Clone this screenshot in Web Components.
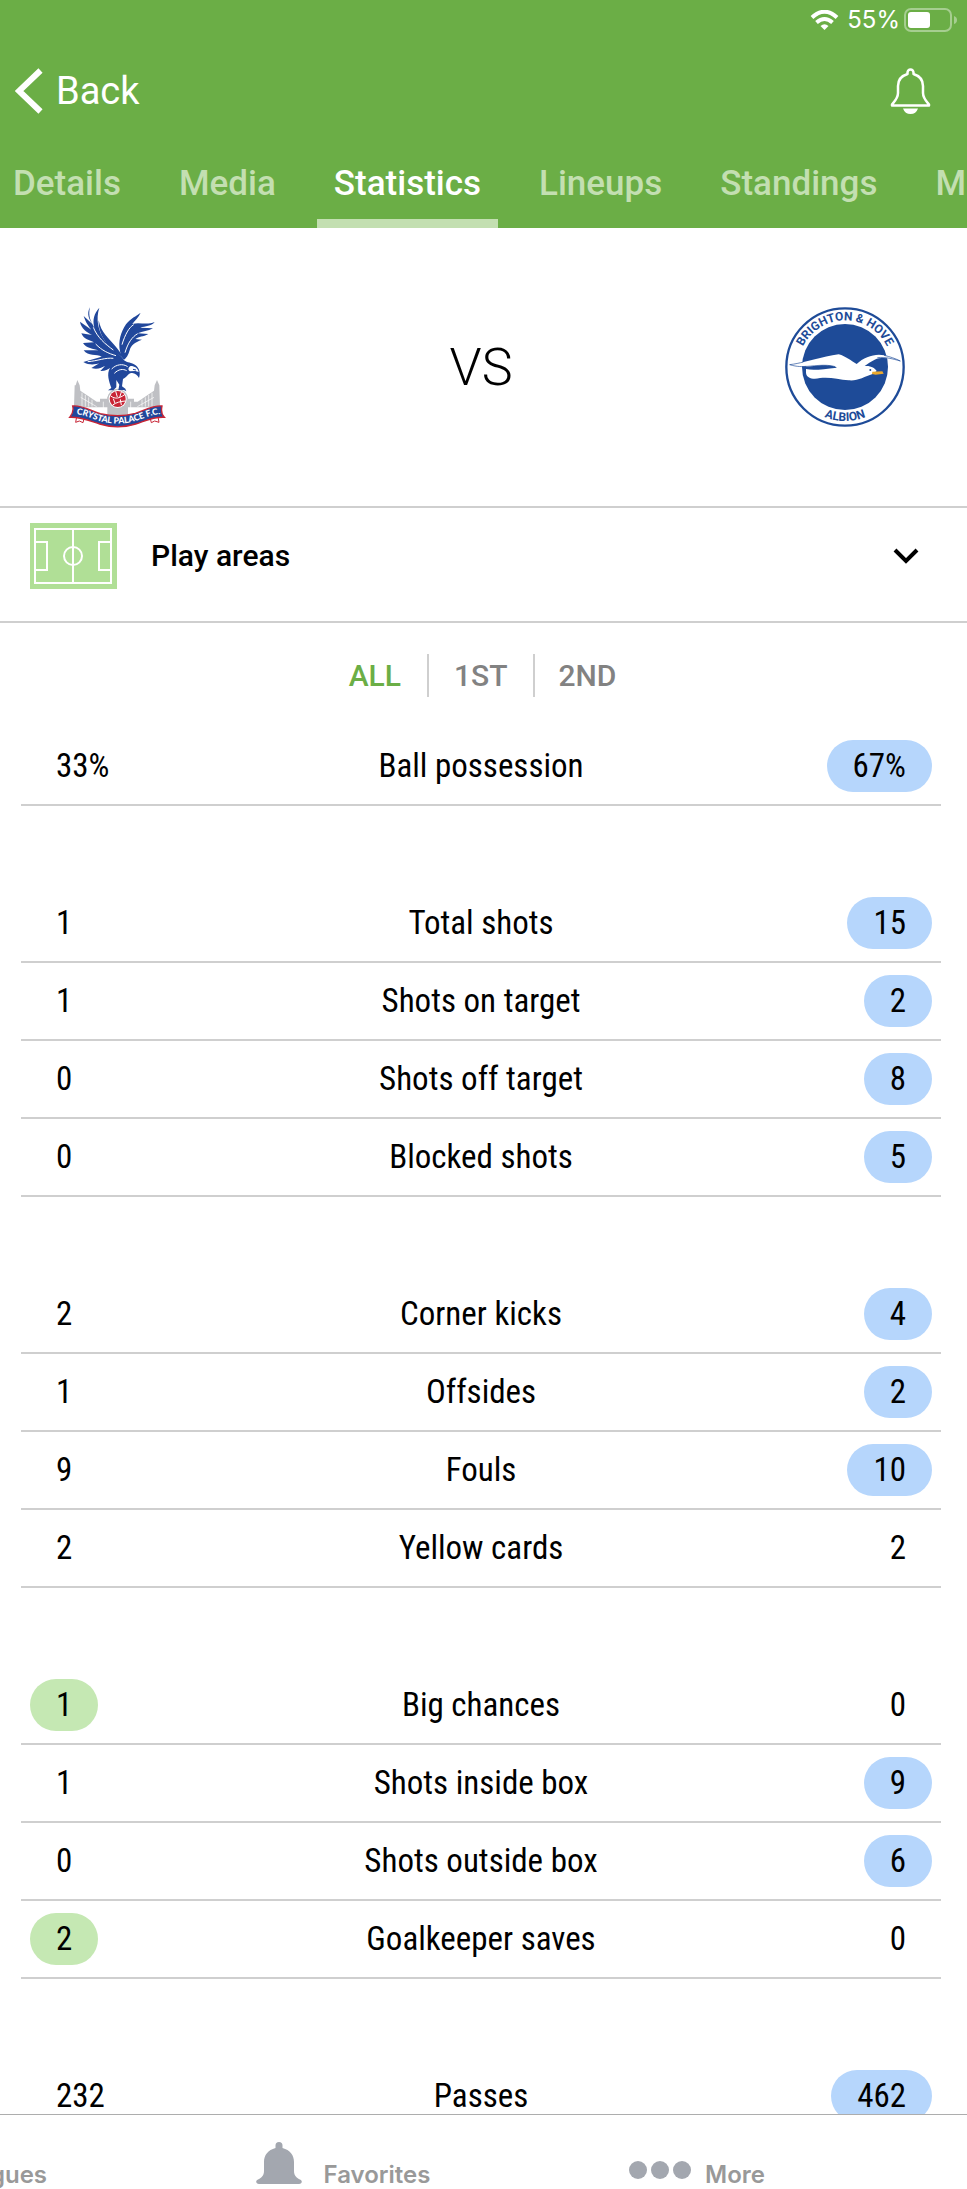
<!DOCTYPE html>
<html lang="en">
<head>
<meta charset="utf-8">
<meta name="viewport" content="width=device-width, initial-scale=1">
<title>Match statistics</title>
<style>
  html, body { margin: 0; height: 100%; background: #fff; }
  body { font-family: Roboto, "Open Sans", sans-serif; color: #000; }
</style>
</head>
<body>
<match-app>
  <app-header slot="header">
    <app-tab>Details</app-tab>
    <app-tab>Media</app-tab>
    <app-tab active>Statistics</app-tab>
    <app-tab>Lineups</app-tab>
    <app-tab>Standings</app-tab>
    <app-tab>Matches</app-tab>
  </app-header>

  <match-teams>
    <palace-crest slot="home"></palace-crest>
    <brighton-crest slot="away"></brighton-crest>
  </match-teams>
  <play-areas>Play areas</play-areas>
  <period-filter></period-filter>

  <stat-group>
    <stat-row label="Ball possession" home="33%" away="67%" lead="away"></stat-row>
  </stat-group>
  <stat-group>
    <stat-row label="Total shots" home="1" away="15" lead="away"></stat-row>
    <stat-row label="Shots on target" home="1" away="2" lead="away"></stat-row>
    <stat-row label="Shots off target" home="0" away="8" lead="away"></stat-row>
    <stat-row label="Blocked shots" home="0" away="5" lead="away"></stat-row>
  </stat-group>
  <stat-group>
    <stat-row label="Corner kicks" home="2" away="4" lead="away"></stat-row>
    <stat-row label="Offsides" home="1" away="2" lead="away"></stat-row>
    <stat-row label="Fouls" home="9" away="10" lead="away"></stat-row>
    <stat-row label="Yellow cards" home="2" away="2"></stat-row>
  </stat-group>
  <stat-group>
    <stat-row label="Big chances" home="1" away="0" lead="home"></stat-row>
    <stat-row label="Shots inside box" home="1" away="9" lead="away"></stat-row>
    <stat-row label="Shots outside box" home="0" away="6" lead="away"></stat-row>
    <stat-row label="Goalkeeper saves" home="2" away="0" lead="home"></stat-row>
  </stat-group>
  <stat-group>
    <stat-row label="Passes" home="232" away="462" lead="away"></stat-row>
  </stat-group>

  <bottom-nav slot="footer"></bottom-nav>
</match-app>

<script>
const define = (name, html, setup) => {
  const tpl = document.createElement('template');
  tpl.innerHTML = html;
  customElements.define(name, class extends HTMLElement {
    connectedCallback() {
      if (this.shadowRoot) return;
      this.attachShadow({ mode: 'open' }).append(tpl.content.cloneNode(true));
      if (setup) setup(this, this.shadowRoot);
    }
  });
};

define('match-app', `
<style>
  :host { display: flex; flex-direction: column; height: 100vh; overflow: hidden; }
  main { flex: 1; min-height: 0; overflow-y: auto; scrollbar-width: none; }
</style>
<slot name="header"></slot>
<main><slot></slot></main>
<slot name="footer"></slot>`);

define('status-bar', `
<style>
  :host { display: flex; justify-content: flex-end; align-items: center; height: 40px; padding-right: 10px;
          font: 400 24px/40px Inter, sans-serif; color: #fff; }
  .wifi { margin-right: 8px; }
  .battery { margin-left: 4px; }
  svg { display: block; }
</style>
<svg class="wifi" width="29" height="20" viewBox="0 0 29 20" fill="none" stroke="#fff" stroke-width="4">
  <path d="M2 7.5Q14.500-4 27 7.500"/><path d="M6.500 12.500Q14.500 5.500 22.500 12.500"/>
  <path d="M14.500 20L10.500 16Q14.500 12.500 18.500 16Z" fill="#fff" stroke="none"/>
</svg>
<span>55%</span>
<svg class="battery" width="53" height="24" viewBox="0 0 53 24">
  <rect x="1" y="1" width="46" height="22" rx="6" fill="none" stroke="#a6ce90" stroke-width="2"/>
  <rect x="4" y="4" width="22" height="16" rx="3" fill="#fff"/>
  <path d="M50 8Q53 9 53 12T50 16Z" fill="#a6ce90"/>
</svg>`);

define('app-header', `
<style>
  :host { display: block; flex: none; background: #6bae46; color: #fff; overflow: hidden; }
  .bar { display: flex; justify-content: space-between; align-items: center; height: 102px; padding: 0 36px 0 15px; box-sizing: border-box; }
  button { display: flex; align-items: center; gap: 13px; padding: 0; border: 0; background: none; color: inherit; font: 400 38px/48px Roboto, sans-serif; }
  svg { display: block; }
  nav { display: flex; gap: 24px; height: 86px; margin-left: -4px; }
</style>
<status-bar></status-bar>
<div class="bar">
  <button type="button"><svg width="28" height="46" viewBox="0 0 28 46" fill="none" stroke="#fff" stroke-width="6"><path d="M25.500 2.500L4 23L25.500 43.500"/></svg>Back</button>
  <button type="button" aria-label="Notifications">
    <svg width="41" height="46" viewBox="0 0 41 46">
      <path d="M17.500 6V4.500A3 3 0 0 1 23.500 4.500V6C30 8 33 12 33 18V25C33 30 36 33 39 36.500V37.500H2V36.500C5 33 8 30 8 25V18C8 12 11 8 17.500 6Z" fill="none" stroke="#fff" stroke-width="2.500" stroke-linejoin="round"/>
      <path d="M13 40.500H28Q26 46 20.500 46T13 40.500Z" fill="#fff"/>
    </svg>
  </button>
</div>
<nav aria-label="Match sections"><slot></slot></nav>`);

define('app-tab', `
<style>
  :host { display: block; flex: none; color: #c3dfb1; }
  a { display: block; box-sizing: border-box; height: 86px; padding: 18px 17px 0; color: inherit; text-decoration: none;
      font: 500 35px/48px Roboto, sans-serif; }
  :host([active]) { color: #fff; }
  :host([active]) a { border-bottom: 9px solid #c3dfb1; }
</style>
<a href="#"><slot></slot></a>`);

define('match-teams', `
<style>
  :host { display: grid; grid-template-columns: 1fr auto 1fr; align-items: center; height: 278px; padding: 0 62px 0 57px; font: 300 52px/60px Roboto, sans-serif; }
  .home { padding-left: 11px; }
  .away { justify-self: end; }
  span { padding-top: 2px; }
</style>
<div class="home"><slot name="home"></slot></div><span>VS</span><div class="away"><slot name="away"></slot></div>`);

define('palace-crest', `
<style>:host { display: block; } svg { display: block; }</style>
<svg width="98" height="122" viewBox="54 48 294 366" role="img" aria-label="Crystal Palace crest">
  <g fill="#bfc0c4">
    <path d="M77 286L82 270L89 286L91 302L140 335H150V326H252V335H263L312 302L314 286L321 270L328 286L330 352H72L74 286Z"/>
    <circle cx="203" cy="327" r="31"/><rect x="172" y="320" width="62" height="60"/>
  </g>
  <g stroke="#fff" stroke-width="2"><path d="M96 308V350M106 315V350M116 322V350M126 329V350M160 335V365M242 335V365M276 329V350M286 322V350M296 315V350M306 308V350M92 322L140 350M312 322L262 350" fill="none"/></g>
  <g fill="#21479b">
    <path d="M120 52C108 73 119 90 127 102L101 78C108 100 116 109 124 119L90 95C93 115 111 127 126 135L94 130C101 148 119 151 132 157L99 159C108 176 131 175 145 181L101 181C114 199 140 192 155 200L100 216C118 227 137 223 148 220L124 234C143 240 156 232 165 228L151 243C164 244 174 238 180 234C169 252 177 274 184 294L174 301H190L199 292V270L208 284L205 300H222L229 304L226 296L216 289L219 267C230 262 233 252 243 249C253 247 262 254 267 264C272 252 269 235 257 226C244 216 232 219 222 211C211 190 179 177 165 153C144 120 137 88 148 53C132 70 127 89 133 113C121 92 114 77 120 52Z"/>
    <path d="M146 91C153 128 176 145 195 167C205 179 215 191 219 203C192 186 174 170 163 150C150 130 145 109 146 91Z"/>
    <path d="M210 184C204 155 212 127 228 103C242 84 258 79 272 68C266 83 254 91 247 102C267 96 293 106 314 96C304 109 286 108 271 113L309 115C294 124 278 123 263 130L295 132C279 141 267 139 256 147L276 149C253 158 243 165 239 181C235 195 229 205 222 209C216 204 212 196 210 184Z"/>
  </g>
  <g fill="none" stroke="#fff" stroke-width="3">
    <path d="M130 112C142 142 165 162 190 180M137 162C156 182 175 190 198 197M113 215C143 213 166 202 190 205"/>
    <path d="M216 164C225 134 237 112 251 104M225 188C234 158 246 141 263 131"/>
    <path d="M185 237C198 223 219 220 233 230M193 250C206 237 219 236 230 242"/>
  </g>
  <path d="M242 228C254 228 264 235 266 246L256 243L240 244C233 240 234 232 242 228Z" fill="#fff"/>
  <path d="M249 238L258 240" stroke="#21479b" stroke-width="3"/>
  <circle cx="203" cy="327" r="27" fill="#fff"/><circle cx="203" cy="327" r="24" fill="#c82435"/>
  <path d="M181 317C196 329 208 325 224 314M188 345C199 337 212 334 226 333M197 304L202 321M214 306L209 322M190 326L195 340M211 328L214 345" fill="none" stroke="#fff" stroke-width="3"/>
  <path d="M81 374L102 386L99 398L88 393L77 397ZM323 374L301 386L304 398L314 393L327 397Z" fill="#fff" stroke="#c82435" stroke-width="3"/>
  <path d="M68 348C94 345 120 361 151 371C185 379 224 379 256 370C286 360 309 346 336 348C333 362 335 374 343 382C309 380 286 393 257 402C222 413 184 413 149 402C118 392 92 380 59 382C68 371 72 362 68 348Z" fill="#21479b" stroke="#c82435" stroke-width="4"/>
  <path id="ribbon" d="M70 373C98 371 121 385 151 394C184 403 224 403 256 393C286 384 308 371 340 373" fill="none"/>
  <text fill="#fff" font-family="Lato, sans-serif" font-weight="900" font-size="26" text-anchor="middle"><textPath href="#ribbon" startOffset="50%">CRYSTAL PALACE F.C.</textPath></text>
</svg>`);

define('brighton-crest', `
<style>:host { display: block; } svg { display: block; }</style>
<svg width="120" height="120" viewBox="46 51 360 360" role="img" aria-label="Brighton and Hove Albion crest">
  <circle cx="226" cy="231" r="176" fill="#fff" stroke="#1e4b98" stroke-width="7"/>
  <circle cx="226" cy="231" r="129" fill="#1e4b98"/>
  <path id="top" d="M86 231A140 140 0 0 1 366 231" fill="none"/>
  <path id="bottom" d="M64 231A162 162 0 0 0 388 231" fill="none"/>
  <g fill="#1e4b98" font-family="Roboto, sans-serif" font-weight="700" font-size="36" text-anchor="middle">
    <text><textPath href="#top" startOffset="50%">BRIGHTON &amp; HOVE</textPath></text>
    <text><textPath href="#bottom" startOffset="50%">ALBION</textPath></text>
  </g>
  <path d="M60 224C107 219 158 199 207 193C229 199 245 213 261 222C284 201 316 190 343 196C361 200 378 206 392 213C364 205 337 200 315 209C304 214 293 222 285 228C303 226 316 234 321 243L309 252C284 260 263 274 237 271C207 268 180 260 151 264C131 269 110 265 109 248V237C130 242 158 238 202 233C194 227 174 224 145 227C111 230 76 233 60 224Z" fill="#fff"/>
  <path d="M97 230C130 229 167 221 197 230M60 224C83 231 98 230 110 229M60 224C76 222 90 219 101 216M323 203C346 200 371 207 392 213M343 196C361 200 378 206 392 213" fill="none" stroke="#1e4b98" stroke-width="2"/>
  <path d="M308 245L338 244L342 251L318 254L307 252Z" fill="#eba92d"/><circle cx="302" cy="240" r="3" fill="#1e4b98"/>
</svg>`);

define('play-areas', `
<style>
  :host { display: block; border: solid #cfcfcf; border-width: 2px 0; }
  button { display: flex; align-items: center; width: 100%; height: 113px; padding: 0 48px 18px 30px; box-sizing: border-box; border: 0; background: none; color: #000;
           font: 500 30px/40px Roboto, sans-serif; text-align: left; }
  span { flex: 1; margin-left: 34px; }
  svg { display: block; flex: none; }
</style>
<button type="button" aria-expanded="false">
  <svg width="87" height="66" viewBox="0 0 87 66"><rect width="87" height="66" fill="#b0df96"/>
    <g fill="none" stroke="#fff" stroke-width="2"><rect x="5" y="6" width="76" height="54"/><path d="M43 6V60M5 19H17V47H5M81 19H69V47H81"/><circle cx="43" cy="33" r="9"/></g></svg>
  <span><slot></slot></span>
  <svg width="26" height="16" viewBox="0 0 26 16" fill="none" stroke="#000" stroke-width="4"><path d="M2 2L13 13L24 2"/></svg>
</button>`);

define('period-filter', `
<style>
  :host { display: flex; justify-content: center; align-items: center; height: 105px; }
  button { height: 43px; padding: 0 26px; border: 0; background: none; font: 500 30px/43px Roboto, sans-serif; color: #828282; }
  button + button { padding-left: 25px; border-left: 2px solid #cfcfcf; }
  button:last-child { padding: 0 28px 0 23px; }
  .on { color: #6bae46; }
</style>
<button type="button" class="on" aria-pressed="true">ALL</button><button type="button" aria-pressed="false">1ST</button><button type="button" aria-pressed="false">2ND</button>`);

define('stat-group', `
<style>
  :host { display: block; padding: 0 26px 79px 21px; }
  table { width: 100%; table-layout: fixed; border-spacing: 0; font: 400 33px/52px "Roboto Condensed", Roboto, sans-serif; }
  td, th { box-sizing: border-box; height: 78px; padding: 12px 9px; border-bottom: 2px solid #cfcfcf; font-weight: 400; text-align: center; }
  td:first-child { width: 25%; text-align: left; }
  td:last-child { width: 25%; text-align: right; }
  td span { display: block; width: fit-content; height: 52px; padding: 0 26px; border-radius: 26px; }
  td:last-child span { margin-left: auto; }
  .home { background: #c5e8b3; }
  .away { background: #b6d6fc; }
</style>
<table><tbody></tbody></table>`, (host, root) => {
  const body = root.querySelector('tbody');
  for (const item of host.querySelectorAll('stat-row')) {
    const row = body.insertRow();
    const value = side => {
      const pill = document.createElement('span');
      pill.textContent = item.getAttribute(side);
      if (item.getAttribute('lead') === side) pill.className = side;
      row.insertCell().append(pill);
    };
    value('home');
    const label = document.createElement('th');
    label.scope = 'row';
    label.textContent = item.getAttribute('label');
    row.append(label);
    value('away');
  }
});

define('bottom-nav', `
<style>
  :host { display: block; flex: none; overflow: hidden; background: #fff; border-top: 1px solid #adadad; }
  nav { display: flex; height: 74px; margin-left: -188px; }
  a { display: flex; flex: none; justify-content: center; align-items: flex-end; width: 354px; box-sizing: border-box;
      color: #999; text-decoration: none; font: 600 24px/28px Inter, sans-serif; }
  a:first-child { justify-content: flex-end; padding-right: 119px; }
  svg { display: block; }
  .bell { margin: 0 22px 5px 0; }
  .dots { margin: 0 14px 10px 0; }
</style>
<nav aria-label="Main">
  <a href="#">Leagues</a>
  <a href="#"><svg class="bell" width="46" height="42" viewBox="0 0 46 42" fill="#a3a7af"><path d="M19.500 6V3.500A3.500 3.500 0 0 1 26.500 3.500V6C34 8 38 13 38 20V29C38 34 41 36 44 37.500C47 39 46 42 43 42H3C0 42-1 39 2 37.500C5 36 8 34 8 29V20C8 13 12 8 19.500 6Z"/></svg>Favorites</a>
  <a href="#"><svg class="dots" width="62" height="18" viewBox="0 0 62 18" fill="#a3a7af"><circle cx="9" cy="9" r="9"/><circle cx="31" cy="9" r="9"/><circle cx="53" cy="9" r="9"/></svg>More</a>
</nav>`);
</script>
</body>
</html>
